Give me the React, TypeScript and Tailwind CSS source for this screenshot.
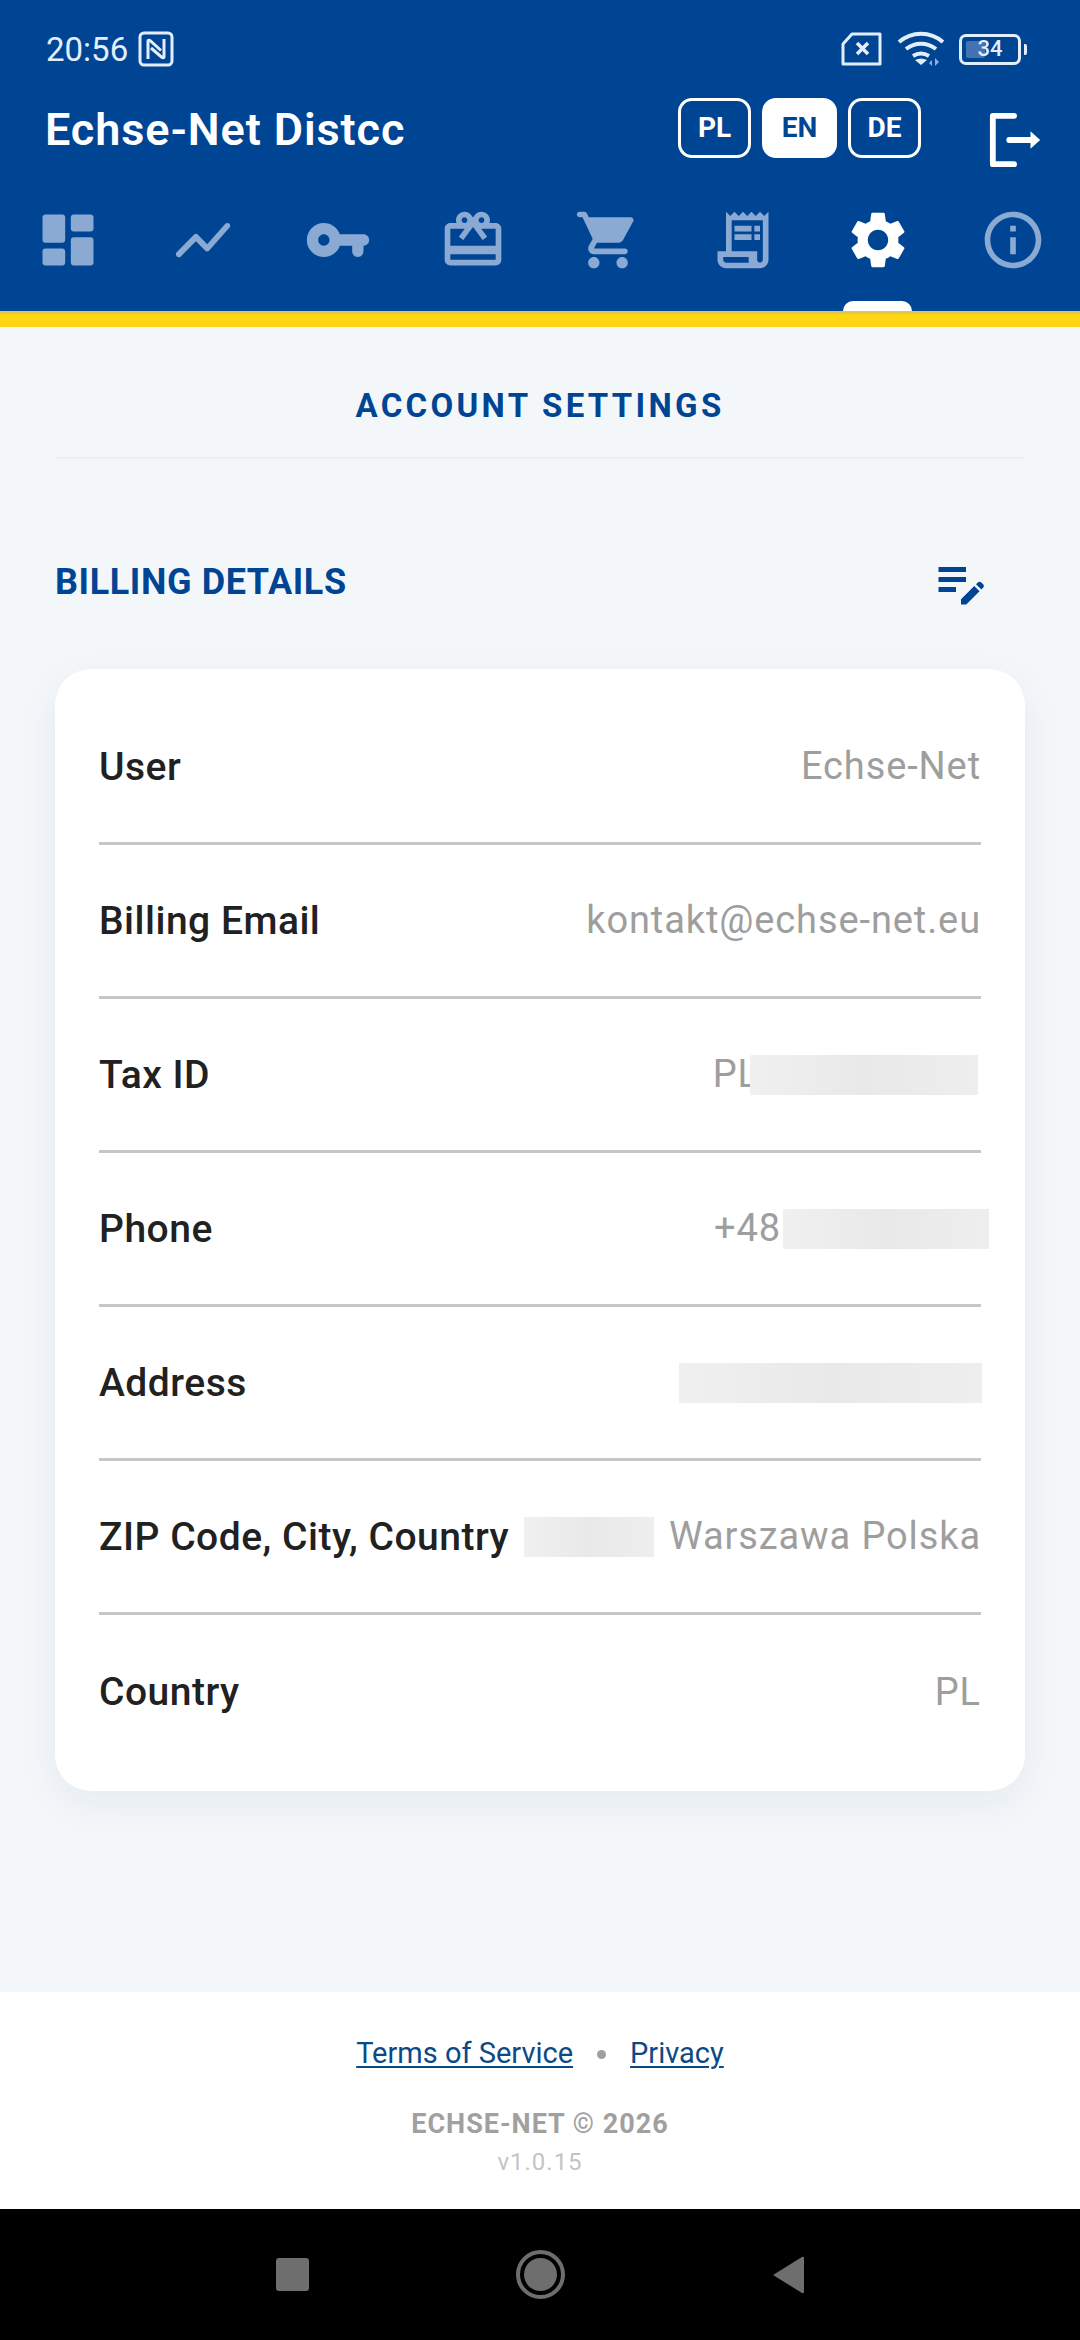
// Account settings screen: status bar, blue header with tabs, billing card, footer, system nav.
import type { ReactNode } from 'react'

const NAV_ICONS: { d: string; active?: boolean }[] = [
  { d: 'M4 13h6c.55 0 1-.45 1-1V4c0-.55-.45-1-1-1H4c-.55 0-1 .45-1 1v8c0 .55.45 1 1 1zm0 8h6c.55 0 1-.45 1-1v-4c0-.55-.45-1-1-1H4c-.55 0-1 .45-1 1v4c0 .55.45 1 1 1zm10 0h6c.55 0 1-.45 1-1v-8c0-.55-.45-1-1-1h-6c-.55 0-1 .45-1 1v8c0 .55.45 1 1 1zM13 4v4c0 .55.45 1 1 1h6c.55 0 1-.45 1-1V4c0-.55-.45-1-1-1h-6c-.55 0-1 .45-1 1z' },
  { d: 'M4.2 17.78l5.3-5.3 3.25 3.25c.41.41 1.07.39 1.45-.04l7.17-8.07c.35-.39.33-.99-.04-1.37-.4-.4-1.07-.39-1.45.04l-6.39 7.18-3.29-3.29a.996.996 0 0 0-1.41 0l-6.09 6.1c-.39.39-.39 1.03 0 1.42l.09.09c.39.39 1.03.39 1.42-.01z' },
  { d: 'M12.65 10C11.83 7.67 9.61 6 7 6c-3.31 0-6 2.69-6 6s2.69 6 6 6c2.61 0 4.83-1.67 5.65-4H17v2c0 1.1.9 2 2 2s2-.9 2-2v-2c1.1 0 2-.9 2-2s-.9-2-2-2H12.65zM7 14c-1.1 0-2-.9-2-2s.9-2 2-2 2 .9 2 2-.9 2-2 2z' },
  { d: 'M20 6h-2.18c.11-.31.18-.65.18-1 0-1.66-1.34-3-3-3-1.05 0-1.96.54-2.5 1.35l-.5.67-.5-.68C10.96 2.54 10.05 2 9 2 7.34 2 6 3.34 6 5c0 .35.07.69.18 1H4c-1.11 0-1.99.89-1.99 2L2 19c0 1.11.89 2 2 2h16c1.11 0 2-.89 2-2V8c0-1.11-.89-2-2-2zm-5-2c.55 0 1 .45 1 1s-.45 1-1 1-1-.45-1-1 .45-1 1-1zM9 4c.55 0 1 .45 1 1s-.45 1-1 1-1-.45-1-1 .45-1 1-1zm11 15H4v-2h16v2zm0-5H4V8h5.08L7 10.83 8.62 12 11 8.76l1-1.36 1 1.36L15.38 12 17 10.83 14.92 8H20v6z' },
  { d: 'M7 18c-1.1 0-1.99.9-1.99 2S5.9 22 7 22s2-.9 2-2-.9-2-2-2zM1 3c0 .55.45 1 1 1h1l3.6 7.59-1.35 2.44C4.52 15.37 5.48 17 7 17h11c.55 0 1-.45 1-1s-.45-1-1-1H7l1.1-2h7.45c.75 0 1.41-.41 1.75-1.03l3.58-6.49A.996.996 0 0 0 20.01 4H5.21l-.67-1.43a.993.993 0 0 0-.9-.57H2c-.55 0-1 .45-1 1zm16 15c-1.1 0-1.99.9-1.99 2s.89 2 1.99 2 2-.9 2-2-.9-2-2-2z' },
  { d: 'M19.5 3.5 18 2l-1.5 1.5L15 2l-1.5 1.5L12 2l-1.5 1.5L9 2 7.5 3.5 6 2v14H3v3c0 1.66 1.34 3 3 3h12c1.66 0 3-1.34 3-3V2l-1.5 1.5zM15 20H6c-.55 0-1-.45-1-1v-1h9v2zm4-1c0 .55-.45 1-1 1s-1-.45-1-1v-3H8V5h11v14zM9 7h6v2H9zM16 7h2v2h-2zM9 10h6v2H9zM16 10h2v2h-2z' },
  { active: true, d: 'M19.14 12.94c.04-.3.06-.61.06-.94 0-.32-.02-.64-.07-.94l2.03-1.58c.18-.14.23-.41.12-.61l-1.92-3.32c-.12-.22-.37-.29-.59-.22l-2.39.96c-.5-.38-1.03-.7-1.62-.94l-.36-2.54c-.04-.24-.24-.41-.48-.41h-3.84c-.24 0-.43.17-.47.41l-.36 2.54c-.59.24-1.13.57-1.62.94l-2.39-.96c-.22-.08-.47 0-.59.22L2.74 8.87c-.12.21-.08.47.12.61l2.03 1.58c-.05.3-.09.63-.09.94s.02.64.07.94l-2.03 1.58c-.18.14-.23.41-.12.61l1.92 3.32c.12.22.37.29.59.22l2.39-.96c.5.38 1.03.7 1.62.94l.36 2.54c.05.24.24.41.48.41h3.84c.24 0 .44-.17.47-.41l.36-2.54c.59-.24 1.13-.56 1.62-.94l2.39.96c.22.08.47 0 .59-.22l1.92-3.32c.12-.22.07-.47-.12-.61l-2.01-1.58zM12 15.6c-1.98 0-3.6-1.62-3.6-3.6s1.62-3.6 3.6-3.6 3.6 1.62 3.6 3.6-1.62 3.6-3.6 3.6z' },
  { d: 'M11 7h2v2h-2zm0 4h2v6h-2zm1-9C6.48 2 2 6.48 2 12s4.48 10 10 10 10-4.48 10-10S17.52 2 12 2zm0 18c-4.41 0-8-3.59-8-8s3.59-8 8-8 8 3.59 8 8-3.59 8-8 8z' },
]

function Blur({ className }: { className: string }) {
  return <span className={`relative block h-[40px] bg-gradient-to-r from-[#f0f0f0] via-[#e9e9e9] to-[#eeeeee] ${className}`} />
}

function Row({ label, children, last }: { label: string; children: ReactNode; last?: boolean }) {
  return (
    <div className={`flex h-[154px] items-center justify-between ${last ? '' : 'border-b-[3px] border-[#c6c6ca]'}`}>
      <span className="mt-[1px] text-[39px] font-medium tracking-[0.5px] text-[#212121]">{label}</span>
      <span className="flex items-center text-[38px] tracking-[0.9px] text-[#9e9e9e]">{children}</span>
    </div>
  )
}

function LangButton({ code, active }: { code: string; active?: boolean }) {
  return (
    <div
      className={`flex h-[60px] items-center justify-center rounded-[14px] border-[3px] border-white text-[28px] font-bold ${
        active ? 'w-[75px] bg-white text-[#004594]' : 'w-[73px] text-white'
      }`}
    >
      {code}
    </div>
  )
}

function StatusBar() {
  return (
    <div className="flex h-[96px] items-center justify-between pl-[46px] pr-[53px] pt-[2px] text-[#e3eefc]">
      <div className="flex items-center gap-[10px]">
        <span className="text-[33px] leading-none">20:56</span>
        <svg width="36" height="36" viewBox="0 0 36 36" fill="none" stroke="currentColor">
          <rect x="2" y="2" width="32" height="32" rx="4" strokeWidth="3" />
          <path d="M10 28V10c0-1 1-1 2-.5l11 10M26 8v18c0 1-1 1-2 .5L13 17" strokeWidth="3" />
        </svg>
      </div>
      <div className="flex items-center gap-[14px]">
        <svg width="42" height="34" viewBox="0 0 42 34" fill="none" stroke="currentColor" strokeWidth="3">
          <path d="M2 12 11 2h28v30H2z" strokeLinejoin="round" />
          <path d="M16 11l11 11M27 11 16 22" strokeWidth="3.5" />
        </svg>
        <svg width="48" height="36" viewBox="0 0 48 36" fill="none" stroke="currentColor" strokeWidth="4">
          <path d="M2 11c13-11 31-11 44 0" />
          <path d="M9 18c9-7 21-7 30 0" />
          <path d="M16 25c5-3 11-3 16 0" />
          <path d="M24 34l-6-5c4-2 8-2 12 0z" fill="currentColor" stroke="none" />
          <path d="M35 29l-3 3 3 3zM38 35v-8l4 4" fill="#8fb0dc" stroke="none" />
        </svg>
        <div className="flex items-center gap-[3px]">
          <div className="relative flex h-[31px] w-[62px] items-center justify-center rounded-[7px] border-[3px] border-[#e3eefc]">
            <div className="absolute inset-y-[4px] left-[4px] w-[19px] rounded-[2px] bg-[#4472b5]" />
            <span className="relative text-[22px] font-medium leading-none">34</span>
          </div>
          <div className="h-[11px] w-[3px] rounded-r-[2px] bg-[#e3eefc]" />
        </div>
      </div>
    </div>
  )
}

function Header() {
  return (
    <header className="bg-[#004594]">
      <StatusBar />
      <div className="flex h-[70px] items-center justify-between pl-[45px] pr-[37px]">
        <span className="mb-[3px] text-[45px] font-semibold tracking-[0.9px] text-white">Echse-Net Distcc</span>
        <div className="flex items-center">
          <div className="mb-[6px] mr-[68px] flex gap-[11px]">
            <LangButton code="PL" />
            <LangButton code="EN" active />
            <LangButton code="DE" />
          </div>
          <svg className="mt-[18px]" width="54" height="56" viewBox="0 0 54 58" fill="none" stroke="#fff" strokeWidth="6" strokeLinecap="round" strokeLinejoin="round">
            <path d="M25 4H3v50h22" />
            <path d="M20 29h24" />
            <path d="M42 20l10 9-10 9z" fill="#fff" stroke="none" />
          </svg>
        </div>
      </div>
      <nav className="grid h-[145px] grid-cols-8">
        {NAV_ICONS.map((icon, i) => (
          <div key={i} className="relative flex justify-center pt-[40px]">
            <svg width="68" height="68" viewBox="0 0 24 24" fill={icon.active ? '#fff' : '#8aa9d3'}>
              <path d={icon.d} />
            </svg>
            {icon.active && <div className="absolute bottom-0 left-[33px] h-[10px] w-[69px] rounded-t-[14px] bg-white" />}
          </div>
        ))}
      </nav>
      <div className="h-[3px] bg-[#dcc94f]" />
      <div className="h-[13px] bg-[#ffd514]" />
    </header>
  )
}

export default function App() {
  return (
    <div className="flex h-[2340px] w-[1080px] flex-col overflow-hidden bg-[#f3f7fa] font-['Roboto',sans-serif]">
      <Header />

      <main className="flex-1 px-[55px]">
        <div className="flex h-[132px] items-center justify-center border-b-[2px] border-[#eceef0] pt-[28px]">
          <h1 className="text-[33px] font-bold tracking-[3.3px] text-[#004594]">ACCOUNT SETTINGS</h1>
        </div>
        <div className="flex h-[210px] items-center justify-between pt-[36px]">
          <h2 className="text-[36px] font-bold tracking-[0.6px] text-[#004594]">BILLING DETAILS</h2>
          <svg className="mr-[34px]" width="60" height="60" viewBox="0 0 24 24" fill="#004594">
            <path d="M3 10h11v2H3v-2zm0-2h11V6H3v2zm0 8h7v-2H3v2zm15.01-3.13.71-.71c.39-.39 1.02-.39 1.41 0l.71.71c.39.39.39 1.02 0 1.41l-.71.71-2.12-2.12zm-.71.71-5.3 5.3V21h2.12l5.3-5.3-2.12-2.12z" />
          </svg>
        </div>
        <section className="rounded-[36px] bg-white px-[44px] py-[22px] shadow-[0_12px_40px_rgba(0,40,90,0.06)]">
          <Row label="User">Echse-Net</Row>
          <Row label="Billing Email">kontakt@echse-net.eu</Row>
          <Row label="Tax ID">
            PL
            <Blur className="-ml-[9px] mr-[3px] w-[228px]" />
          </Row>
          <Row label="Phone">
            +48
            <Blur className="-mr-[8px] ml-[2px] w-[206px]" />
          </Row>
          <Row label="Address">
            <Blur className="-mr-[1px] w-[303px]" />
          </Row>
          <Row label="ZIP Code, City, Country">
            <Blur className="mr-[15px] w-[130px]" />
            Warszawa Polska
          </Row>
          <Row label="Country" last>
            PL
          </Row>
        </section>
      </main>

      <footer className="flex h-[217px] flex-col items-center bg-white pt-[45px]">
        <div className="flex h-[34px] items-center text-[29px] text-[#0b4a86]">
          <a className="underline decoration-[2px] underline-offset-[3px]">Terms of Service</a>
          <span className="mx-[24px] h-[9px] w-[9px] rounded-full bg-[#a0a0a0]" />
          <a className="underline decoration-[2px] underline-offset-[3px]">Privacy</a>
        </div>
        <div className="mt-[36px] text-[27px] font-bold leading-[34px] tracking-[1px] text-[#a0a0a0]">ECHSE-NET © 2026</div>
        <div className="mt-[6px] text-[24px] leading-[30px] tracking-[1px] text-[#c4c4c4]">v1.0.15</div>
      </footer>

      <div className="flex h-[131px] items-center justify-center bg-black">
        <div className="h-[33px] w-[33px] rounded-[3px] bg-[#6e6e6e]" />
        <div className="mx-[207px] flex h-[49px] w-[49px] items-center justify-center rounded-full border-[4px] border-[#6e6e6e]">
          <div className="h-[33px] w-[33px] rounded-full bg-[#6e6e6e]" />
        </div>
        <svg width="33" height="38" viewBox="0 0 33 38" fill="#6e6e6e">
          <path d="M1 19 30 1c1-.5 2 0 2 1v34c0 1-1 1.500-2 1z" />
        </svg>
      </div>
    </div>
  )
}
